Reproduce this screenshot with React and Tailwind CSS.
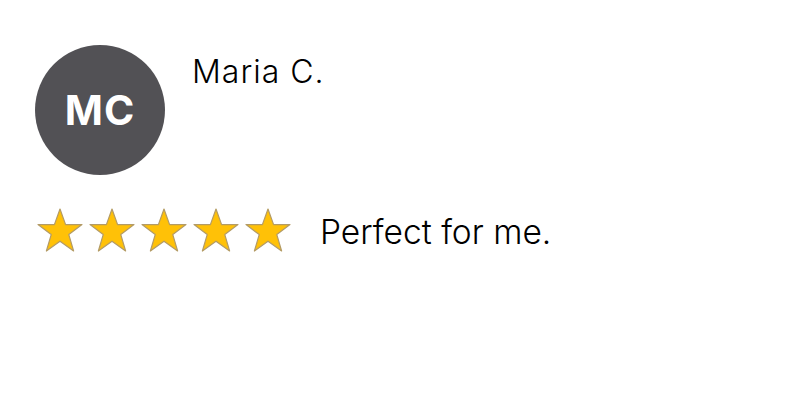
import React from "react";

function Star() {
  return (
    <svg width="48" height="46" viewBox="0 0 48 46">
      <polygon
        points="24,2 29.6,17.6 46,17.6 32.8,27.6 37.6,44 24,34.2 10.4,44 15.2,27.6 2,17.6 18.4,17.6"
        fill="#FFC107"
        stroke="#B39B66"
        strokeWidth="1.2"
        strokeLinejoin="round"
      />
    </svg>
  );
}

export default function App() {
  return (
    <div className="w-[800px] h-[400px] bg-white pl-[35px] pt-[45px]" style={{ fontFamily: "Inter, sans-serif" }}>
      <div className="flex items-start gap-[27px]">
        <div className="w-[130px] h-[130px] rounded-full bg-[#525155] flex items-center justify-center text-white text-[41px] font-bold leading-none tracking-[1px]">
          MC
        </div>
        <div className="text-[32px] font-light leading-none tracking-[1px] text-black mt-[11px]">Maria C.</div>
      </div>
      <div className="flex items-start mt-[32px] ml-[1px]">
        <div className="flex gap-[4px]">
          <Star /><Star /><Star /><Star /><Star />
        </div>
        <div className="ml-[28px] mt-[9px] text-[33.5px] font-light leading-none text-black">Perfect for me.</div>
      </div>
    </div>
  );
}
